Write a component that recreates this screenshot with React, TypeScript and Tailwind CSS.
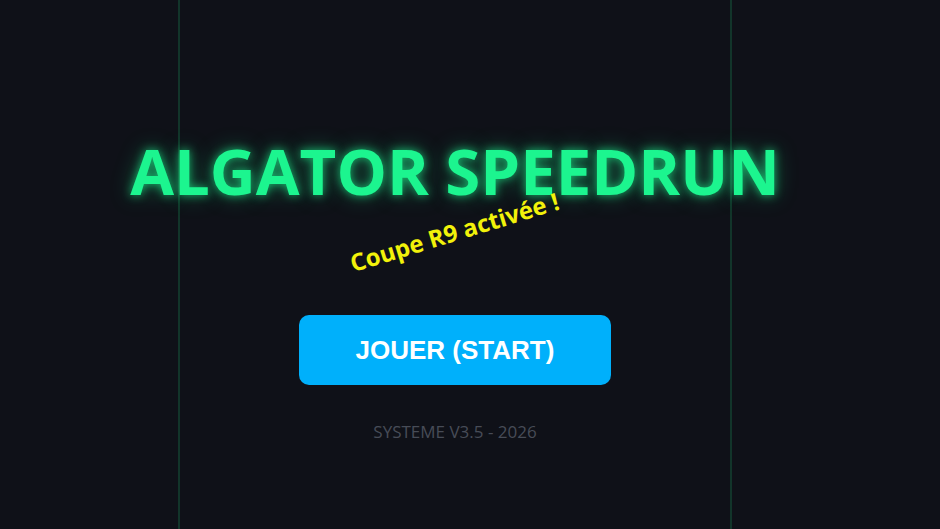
import React from "react";

export default function App() {
  return (
    <div className="relative w-full h-[529px] overflow-hidden bg-[#0f1118] flex flex-col items-center pr-[30px]" style={{ fontFamily: "'Open Sans', 'Noto Sans', sans-serif" }}>
      <div className="absolute top-0 bottom-0 left-[178px] w-[2px] bg-[#12352a]" />
      <div className="absolute top-0 bottom-0 left-[730px] w-[2px] bg-[#12352a]" />
      <div className="relative mt-[128px] h-[86px] flex items-center">
        <h1 className="text-[63.5px] font-bold leading-none text-[#1cf58f] whitespace-nowrap [text-shadow:0_0_10px_rgba(28,245,143,0.7),0_0_22px_rgba(28,245,143,0.35)]">
          ALGATOR SPEEDRUN
        </h1>
        <div className="absolute left-0 right-0 top-[92px] flex justify-center">
          <div className="-rotate-[17deg] text-[24px] font-bold leading-none text-[#f2f20a] whitespace-nowrap">
            Coupe R9 activée !
          </div>
        </div>
      </div>
      <button className="mt-[101px] w-[312px] h-[70px] rounded-[10px] bg-[#00b0fb] text-white text-[26px] font-bold" style={{ fontFamily: "'Liberation Sans', Arial, sans-serif" }}>
        JOUER (START)
      </button>
      <div className="mt-[34px] text-[17px] text-[#474c57]">SYSTEME V3.5 - 2026</div>
    </div>
  );
}
